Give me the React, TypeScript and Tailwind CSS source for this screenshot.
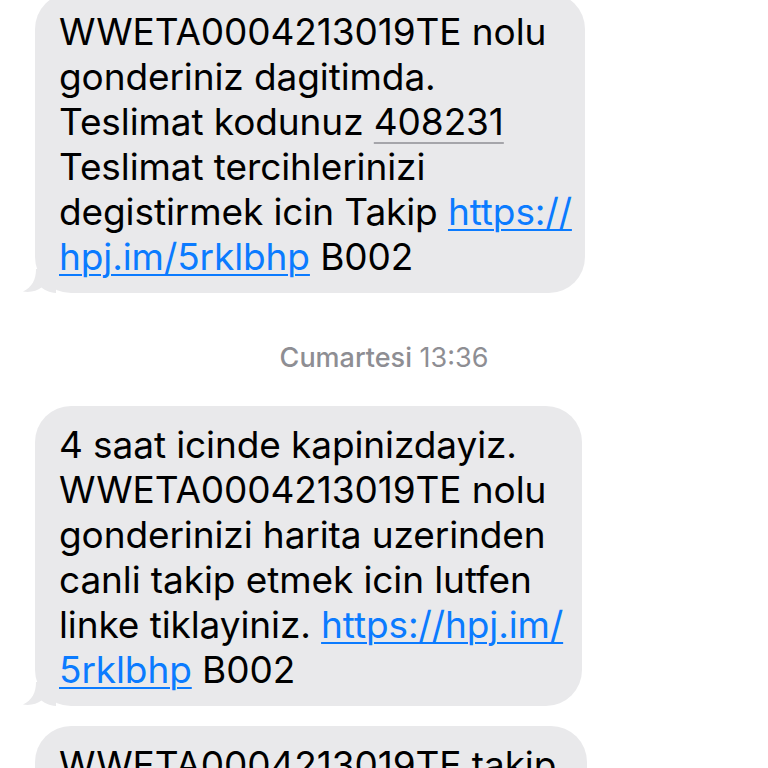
import React from 'react';

const font = { fontFamily: 'Inter, "Noto Sans", sans-serif' };

function Tail() {
  return (
    <svg
      className="absolute left-[-13px] bottom-0"
      width="34"
      height="24"
      viewBox="0 0 34 24"
      fill="#e9e9eb"
    >
      <path d="M14 0 C14 11 10 18 1 22.5 C8 23.8 15 22 19.5 18.5 C23 21.5 27 23.2 34 24 L34 0 Z" />
    </svg>
  );
}

function Link({ children }: { children: React.ReactNode }) {
  return (
    <span className="text-[#0b7bff] underline decoration-[2px] underline-offset-[4px]">{children}</span>
  );
}

function Bubble({
  lines,
  width,
  tail = false,
  className = '',
}: {
  lines: React.ReactNode[];
  width: string;
  tail?: boolean;
  className?: string;
}) {
  return (
    <div className={`relative ml-[35px] rounded-[36px] bg-[#e9e9eb] pl-[24px] pr-4 pt-[16px] pb-[14px] ${width} ${className}`}>
      {tail && <Tail />}
      <div className="relative text-[37px] leading-[45px] tracking-[-0.1px] text-black" style={font}>
        {lines.map((l, i) => (
          <div key={i} className="whitespace-nowrap">
            {l}
          </div>
        ))}
      </div>
    </div>
  );
}

export default function App() {
  return (
    <div className="h-[768px] w-[768px] overflow-hidden bg-white">
      <Bubble
        tail
        width="w-[550px]"
        className="mt-[-7px]"
        lines={[
          'WWETA0004213019TE nolu',
          'gonderiniz dagitimda.',
          <>
            Teslimat kodunuz{' '}
            <span className="underline decoration-[#a5a5aa] decoration-[2px] underline-offset-[7px]">408231</span>
          </>,
          'Teslimat tercihlerinizi',
          <>
            degistirmek icin Takip <Link>https://</Link>
          </>,
          <>
            <Link>hpj.im/5rklbhp</Link> B002
          </>,
        ]}
      />

      <div className="mt-[48px] mb-[31px] text-center text-[27px] leading-[34px] text-[#8e8e93]" style={font}>
        <span className="font-medium">Cumartesi</span> 13:36
      </div>

      <Bubble
        tail
        width="w-[547px]"
        lines={[
          '4 saat icinde kapinizdayiz.',
          'WWETA0004213019TE nolu',
          'gonderinizi harita uzerinden',
          'canli takip etmek icin lutfen',
          <>
            linke tiklayiniz. <Link>https://hpj.im/</Link>
          </>,
          <>
            <Link>5rklbhp</Link> B002
          </>,
        ]}
      />

      <Bubble
        width="w-[552px]"
        className="mt-[20px]"
        lines={['WWETA0004213019TE takip', 'edilebilir.']}
      />
    </div>
  );
}
